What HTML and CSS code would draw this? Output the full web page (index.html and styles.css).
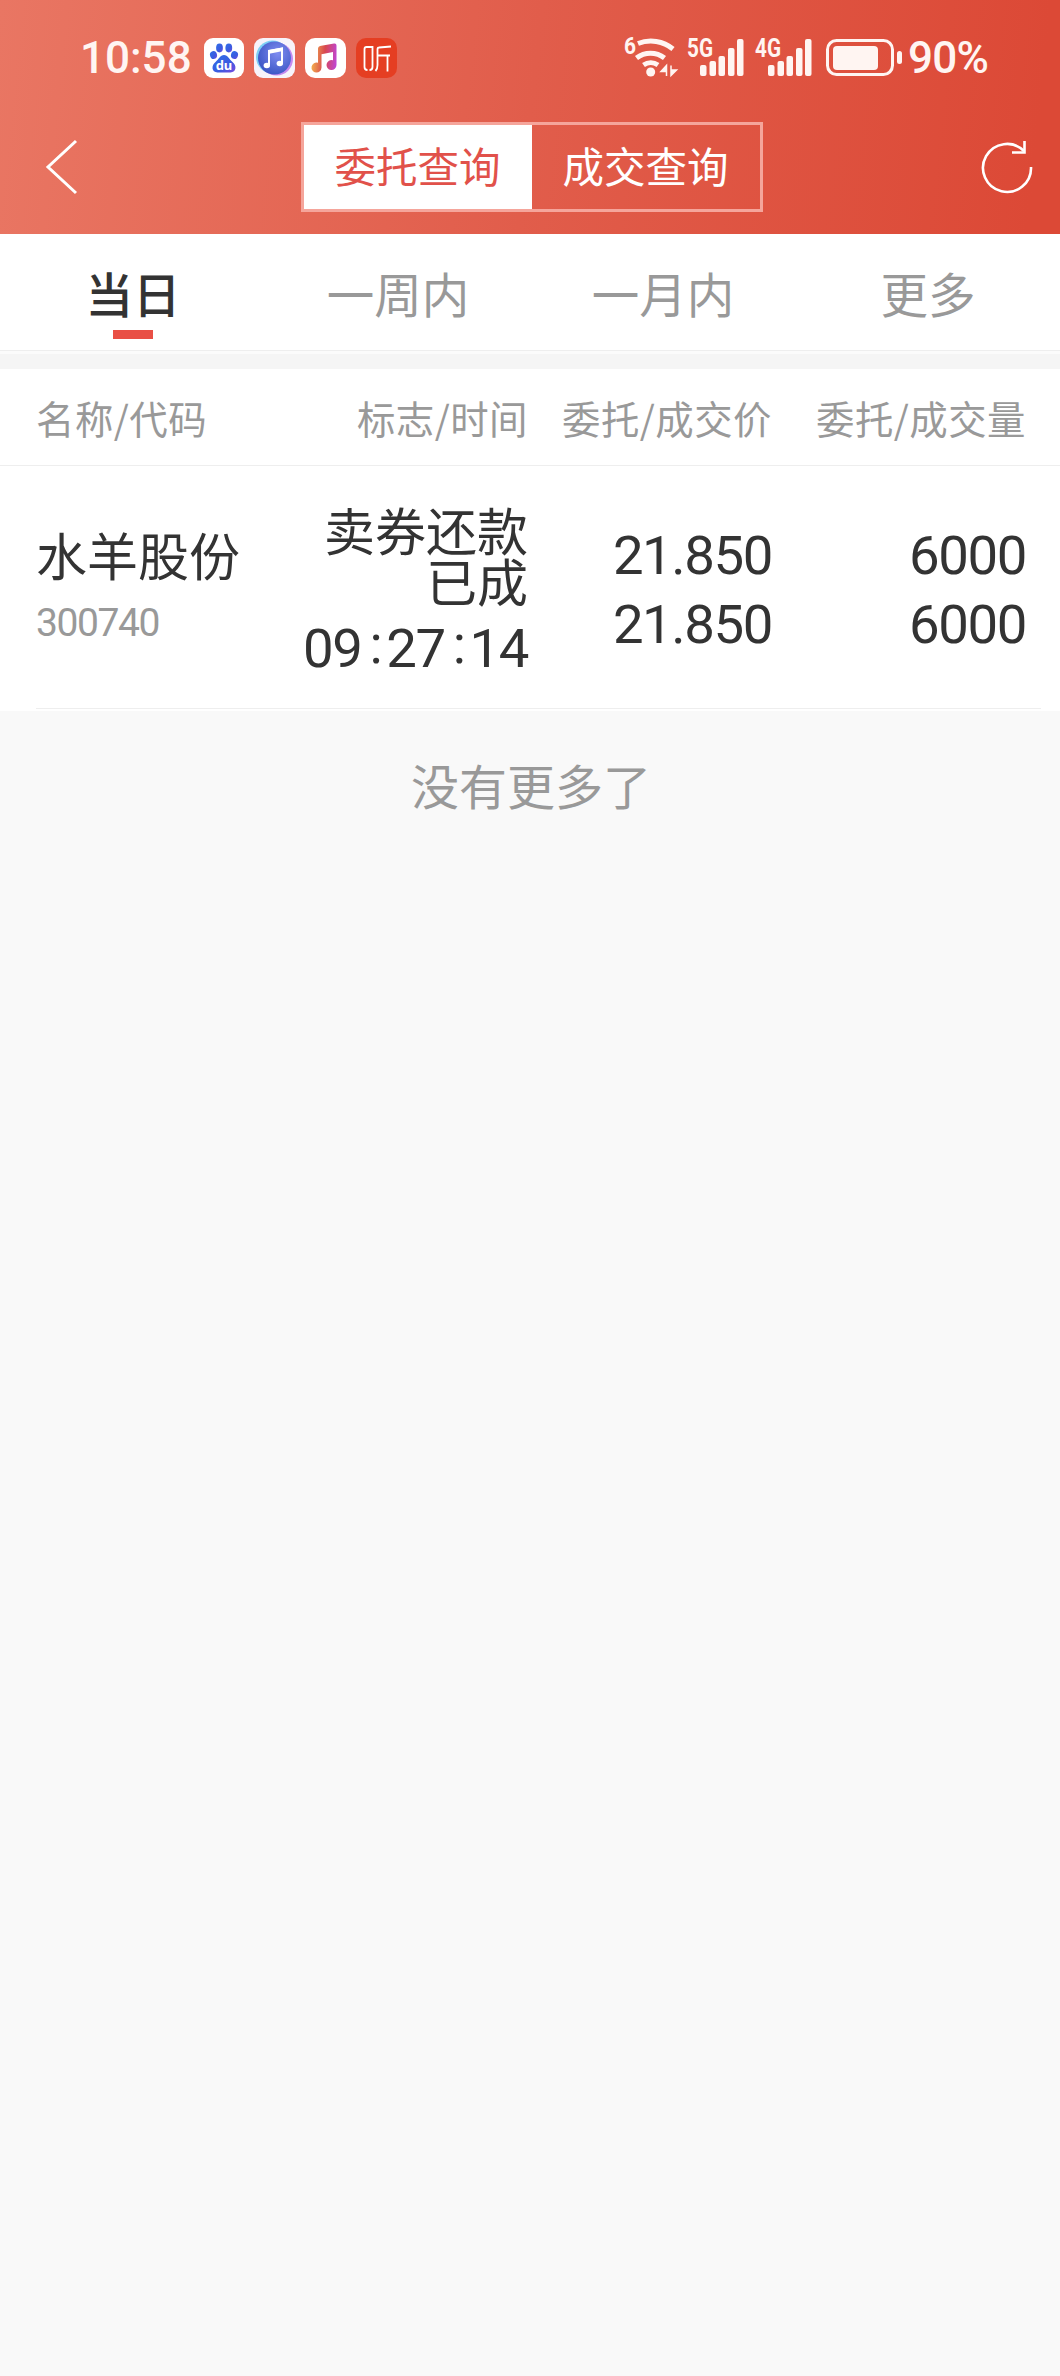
FILE: index.html
```html
<!DOCTYPE html>
<html lang="zh-CN">
<head>
    <meta charset="UTF-8">
    <meta name="viewport" content="width=device-width, initial-scale=1.0">
    <title>委托查询</title>
    <link rel="stylesheet" href="styles.css">
</head>
<body>
    <header class="header">
        <div class="status-bar">
            <span class="clock">10:58</span>
            <div class="app-icons">
                <svg width="40" height="40" viewBox="0 0 40 40">
                    <defs>
                        <linearGradient id="paw" x1="0" y1="0" x2="1" y2="1">
                            <stop offset="0" stop-color="#2f6fe8"/>
                            <stop offset="0.6" stop-color="#3b5be0"/>
                            <stop offset="1" stop-color="#7a4be0"/>
                        </linearGradient>
                    </defs>
                    <rect width="40" height="40" rx="9" fill="#fff"/>
                    <g fill="url(#paw)">
                        <ellipse cx="15.5" cy="10" rx="3.4" ry="4.4"/>
                        <ellipse cx="24.8" cy="10" rx="3.4" ry="4.4"/>
                        <ellipse cx="9.5" cy="17" rx="3.5" ry="4" transform="rotate(-15 9.5 17)"/>
                        <ellipse cx="30.5" cy="17" rx="3.5" ry="4" transform="rotate(15 30.5 17)"/>
                        <path d="M20 17c4 0 5 4 8.500 7 4.500 3.500 4 10-2 10.500-4 .3-9-.3-13 0-6-.5-6.500-7-2-10.500 3.500-3 4.500-7 8.500-7z"/>
                    </g>
                    <text class="paw-text" x="20" y="31.5" text-anchor="middle">du</text>
                </svg>
                <svg width="41" height="40" viewBox="0 0 41 40">
                    <defs>
                        <radialGradient id="disc" cx="0.6" cy="0.35" r="0.75">
                            <stop offset="0" stop-color="#7f8cf0"/>
                            <stop offset="1" stop-color="#3450c0"/>
                        </radialGradient>
                    </defs>
                    <rect width="41" height="40" rx="9" fill="#f7f3fa"/>
                    <circle cx="18.5" cy="19" r="16.5" fill="#7ed0f5"/>
                    <circle cx="22.5" cy="21" r="16.5" fill="#c58af0"/>
                    <circle cx="20.5" cy="20" r="16.5" fill="url(#disc)"/>
                    <path d="M15 27V13l13-2.500v15" fill="none" stroke="#fff" stroke-width="2"/>
                    <path d="M14 12l15-2.500v3.500l-15 3z" fill="#fff"/>
                    <ellipse cx="12.8" cy="27.5" rx="3.2" ry="2.7" fill="#fff"/>
                    <ellipse cx="25.8" cy="25.5" rx="3.2" ry="2.7" fill="#fff"/>
                </svg>
                <svg width="41" height="40" viewBox="0 0 41 40">
                    <defs>
                        <linearGradient id="note" x1="0" y1="0.6" x2="1" y2="0.7">
                            <stop offset="0" stop-color="#f3b04e"/>
                            <stop offset="0.5" stop-color="#d8484e"/>
                            <stop offset="1" stop-color="#bf45d8"/>
                        </linearGradient>
                    </defs>
                    <rect width="41" height="40" rx="10" fill="#fff"/>
                    <path d="M13 10.500q0-2 2-2.500l14-2.500q2.500-.4 2.500 2V27a5 5 0 1 1-3.500-4.800V14l-11.500 2.200V29.500a5 5 0 1 1-3.500-4.800z" fill="url(#note)"/>
                </svg>
                <svg width="41" height="40" viewBox="0 0 41 40">
                    <rect width="41" height="40" rx="10" fill="#e53e22"/>
                    <path d="M8.500 11q0-2 2-2h6v20q0 3-3 3M8.500 11v18q0 3 3 3M35 8.500L23 9.500q-1.500 0-1.500 2V27q0 4-2 6M21.500 17.500H34M31.500 17.500v16" fill="none" stroke="#fff" stroke-width="1.800"/>
                </svg>
            </div>
            <div class="signals">
                <svg width="56" height="44" viewBox="0 0 56 44">
                    <text class="net-text" x="1" y="18" font-size="24" textLength="12" lengthAdjust="spacingAndGlyphs">6</text>
                    <g fill="none" stroke="#fff5f2" stroke-width="5">
                        <path d="M15 7.500a35 35 0 0 1 35 5.500"/>
                        <path d="M13.500 22a23 23 0 0 1 28 0"/>
                        <path d="M20.500 29a13 13 0 0 1 14.500 0"/>
                    </g>
                    <circle cx="27.7" cy="36" r="4.5" fill="#fff5f2"/>
                    <path d="M43.500 40V29.500L38 35.500h5.500M48 29.500v10l5.500-5.500H48" fill="#fff5f2" stroke="#fff5f2" stroke-width="1.5"/>
                </svg>
                <svg width="58" height="44" viewBox="0 0 58 44">
                    <text class="net-text" x="-1" y="21" font-size="25" textLength="26" lengthAdjust="spacingAndGlyphs">5G</text>
                    <g fill="#fff5f2">
                        <rect x="12" y="29" width="6.5" height="11" rx="2"/>
                        <rect x="21.5" y="25" width="6.5" height="15" rx="2"/>
                        <rect x="30.5" y="20" width="6.5" height="20" rx="2"/>
                        <rect x="40" y="12" width="6.5" height="28" rx="2"/>
                        <rect x="49" y="3" width="6.5" height="37" rx="2"/>
                    </g>
                </svg>
                <svg width="58" height="44" viewBox="0 0 58 44">
                    <text class="net-text" x="0" y="21" font-size="25" textLength="26" lengthAdjust="spacingAndGlyphs">4G</text>
                    <g fill="#fff5f2">
                        <rect x="13" y="29" width="6.5" height="11" rx="2"/>
                        <rect x="22.5" y="25" width="6.5" height="15" rx="2"/>
                        <rect x="31.5" y="20" width="6.5" height="20" rx="2"/>
                        <rect x="41" y="12" width="6.5" height="28" rx="2"/>
                        <rect x="50" y="3" width="6.5" height="37" rx="2"/>
                    </g>
                </svg>
                <svg class="battery" width="78" height="44" viewBox="0 0 78 44">
                    <rect x="1.5" y="4.5" width="65" height="34" rx="9" fill="none" stroke="#fff5f2" stroke-width="3"/>
                    <rect x="7" y="10" width="45" height="24" rx="4" fill="#fff5f2"/>
                    <rect x="71" y="15" width="5" height="13" rx="2.5" fill="#fff5f2"/>
                </svg>
                <span class="percent">90%</span>
            </div>
        </div>
        <nav class="nav-bar">
            <svg class="back" width="34" height="60" viewBox="0 0 34 60">
                <path d="M31 4L3 30l28 26" fill="none" stroke="#fff" stroke-width="3"/>
            </svg>
            <div class="segment">
                <span class="segment-item active">委托查询</span>
                <span class="segment-item">成交查询</span>
            </div>
            <svg class="refresh" width="54" height="56" viewBox="0 0 54 56">
                <path d="M50 28A24 24 0 1 1 43 12" fill="none" stroke="#fff" stroke-width="2.6"/>
                <path d="M43.500 2v11.500H31" fill="none" stroke="#fff" stroke-width="2.6"/>
            </svg>
        </nav>
    </header>

    <!-- 时间范围 -->
    <div class="tabs">
        <span class="tab active">当日</span>
        <span class="tab">一周内</span>
        <span class="tab">一月内</span>
        <span class="tab">更多</span>
    </div>

    <!-- 委托列表 -->
    <div class="list">
        <div class="row list-head">
            <span>名称/代码</span>
            <span>标志/时间</span>
            <span>委托/成交价</span>
            <span>委托/成交量</span>
        </div>
        <div class="row list-item">
            <div class="stock">
                <div class="stock-name">水羊股份</div>
                <div class="stock-code">300740</div>
            </div>
            <div class="flag">
                <div class="flag-text">卖券还款<br>已成</div>
                <div class="flag-time">09<i>:</i>27<i>:</i>14</div>
            </div>
            <div class="num">
                <div>21.850</div>
                <div>21.850</div>
            </div>
            <div class="num">
                <div>6000</div>
                <div>6000</div>
            </div>
        </div>
        <div class="line"></div>
    </div>
    <p class="no-more">没有更多了</p>
</body>
</html>
```
FILE: styles.css
```css
* {
    box-sizing: border-box;
}

body {
    margin: 0;
    min-height: 2376px;
    background-color: #f9f9f9;
    color: #333;
    font-family: "Noto Sans CJK SC", sans-serif;
}

svg {
    display: block;
    flex: none;
    overflow: visible;
}

/* 顶部 */
.header {
    height: 234px;
    background: linear-gradient(96deg, #e97663 0%, #e15d4b 50%, #dc4936 97%);
    color: #fff;
}

.status-bar {
    display: flex;
    align-items: center;
    height: 116px;
    padding: 0 73px 0 80px;
}

.clock,
.percent {
    font-family: Roboto, sans-serif;
    font-size: 44px;
    font-weight: 500;
    line-height: 44px;
    color: #fff5f2;
}

.clock {
    width: 124px;
}

.app-icons {
    display: flex;
    gap: 10px;
}

.paw-text {
    font: bold 13px "Noto Sans", sans-serif;
    fill: #fff;
}

.net-text {
    font-family: Roboto, sans-serif;
    font-weight: 700;
    fill: #fff5f2;
}

.signals {
    display: flex;
    align-items: center;
    gap: 9px;
    margin-left: auto;
}

.battery {
    margin-left: 4px;
}

.percent {
    width: 79px;
    margin-left: -5px;
    letter-spacing: -0.8px;
}

.nav-bar {
    display: flex;
    align-items: center;
    justify-content: space-between;
    height: 102px;
    padding: 0 25px 0 45px;
}

.segment {
    display: flex;
    width: 462px;
    height: 90px;
    margin-left: 3px;
    border: 3px solid #f5a59b;
}

.segment-item {
    flex: 1;
    font-size: 41.5px;
    line-height: 81px;
    text-align: center;
}

.segment-item.active {
    background-color: #fff;
    color: #e1514a;
}

/* 时间范围 */
.tabs {
    display: flex;
    height: 120px;
    border-bottom: 3px solid #fbfbfb;
    background-color: #fff;
    box-shadow: inset 0 -1px #eee;
}

.tab {
    display: flex;
    flex: 1;
    flex-direction: column;
    align-items: center;
    padding: 24px 0 0 1px;
    font-size: 47.5px;
    line-height: 69px;
    color: #999;
}

.tab.active {
    font-weight: 500;
    color: #333;
}

.tab.active::after {
    content: "";
    width: 40px;
    height: 9px;
    margin-top: 3px;
    background-color: #e94f45;
}

/* 列表 */
.list {
    border-top: 15px solid #f5f5f5;
    background-color: #fff;
}

.row {
    display: grid;
    grid-template-columns: 232px 260px 244px 254px;
    align-items: center;
    padding-left: 36px;
    text-align: right;
}

.row > :first-child {
    text-align: left;
}

.list-head {
    height: 97px;
    border-bottom: 1px solid #eee;
    font-size: 38.4px;
    letter-spacing: 0.5px;
    color: #999;
}

.list-item {
    height: 242px;
}

.stock-name {
    padding-top: 4px;
    font-size: 51px;
    line-height: 69px;
}

.stock-code {
    font-family: Roboto, sans-serif;
    font-size: 39px;
    letter-spacing: -1.4px;
    line-height: 69px;
    color: #999;
}

.flag-text {
    padding-top: 11px;
    font-size: 51px;
    line-height: 51px;
}

.flag-time,
.num {
    font-family: Roboto, sans-serif;
    font-size: 54.5px;
    letter-spacing: -1.4px;
    line-height: 69px;
}

.num {
    padding-top: 6px;
}

.flag-time {
    padding-top: 9px;
    line-height: 67px;
}

.flag-time i {
    padding: 0 5px 0 8px;
    font-style: normal;
    line-height: 1;
    vertical-align: 4px;
}

.line {
    height: 3px;
    margin: 0 19px 0 36px;
    border-top: 1px solid #eee;
}

.no-more {
    margin: 38px 0 0;
    font-size: 48px;
    line-height: 70px;
    text-align: center;
    text-indent: 2px;
    color: #999;
}
```
